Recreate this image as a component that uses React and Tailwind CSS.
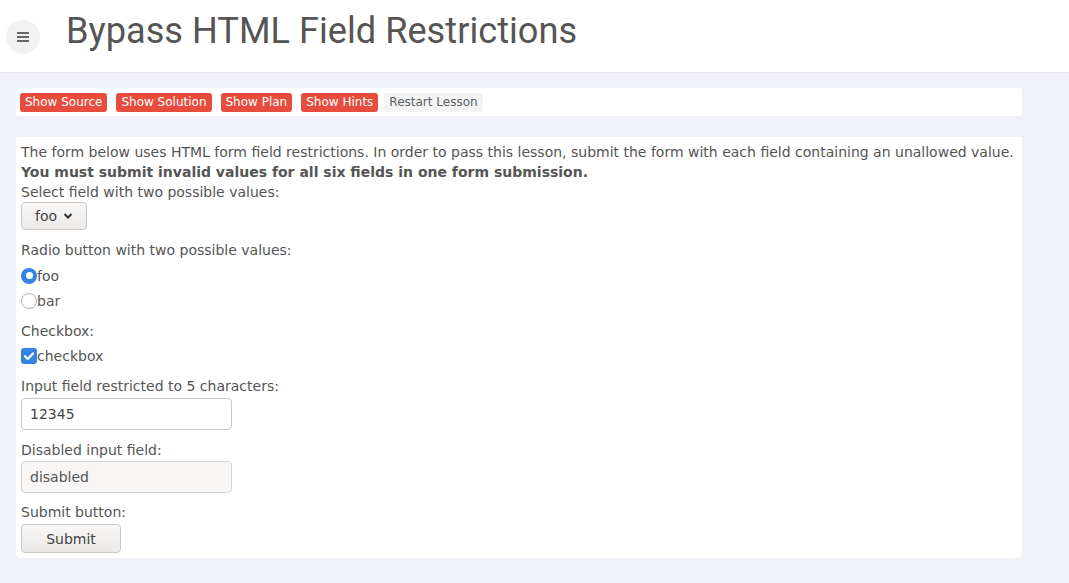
import React from "react";

const body = { fontFamily: '"DejaVu Sans", sans-serif' };

const Radio = ({ checked }) =>
  checked ? (
    <span className="inline-flex w-[16px] h-[16px] rounded-full bg-[#3584e4] items-center justify-center">
      <span className="w-[7px] h-[7px] rounded-full bg-white" />
    </span>
  ) : (
    <span className="inline-block w-[16px] h-[16px] rounded-full border border-[#b7b1ab] bg-white" />
  );

const Checkbox = () => (
  <span className="inline-flex w-[16px] h-[16px] rounded-[3px] bg-[#3584e4] items-center justify-center">
    <svg width="12" height="12" viewBox="0 0 12 12">
      <polyline points="2,6.2 4.8,9 10,3.4" fill="none" stroke="white" strokeWidth="2.2" strokeLinecap="round" strokeLinejoin="round" />
    </svg>
  </span>
);

const LessonButton = ({ children }) => (
  <span className="px-[5px] h-[19px] leading-[19px] rounded-[3px] bg-[#e74c3c] text-white text-[12px]">
    {children}
  </span>
);

export default function App() {
  return (
    <div className="w-[1069px] h-[583px] bg-[#f0f1f6] overflow-hidden" style={body}>
      {/* Header */}
      <div className="h-[73px] bg-white border-b border-[#e4e4e8] flex items-center">
        <div className="ml-[6px] w-[34px] h-[34px] rounded-full bg-[#f2f2f2] flex items-center justify-center mt-[1px]">
          <svg width="12" height="10" viewBox="0 0 12 10">
            <rect x="0" y="0" width="12" height="2" fill="#666" />
            <rect x="0" y="4" width="12" height="2" fill="#666" />
            <rect x="0" y="8" width="12" height="2" fill="#666" />
          </svg>
        </div>
        <h1
          className="ml-[26px] text-[36.2px] text-[#555] leading-none -mt-[9px]"
          style={{ fontFamily: "Roboto, sans-serif" }}
        >
          Bypass HTML Field Restrictions
        </h1>
      </div>

      {/* Lesson buttons */}
      <div className="ml-[16px] w-[1006px] mt-[15px] h-[28px] bg-white rounded-[3px] flex items-center gap-[9px] px-[4px]">
        <LessonButton>Show Source</LessonButton>
        <LessonButton>Show Solution</LessonButton>
        <LessonButton>Show Plan</LessonButton>
        <LessonButton>Show Hints</LessonButton>
        <span className="px-[5px] h-[19px] leading-[19px] rounded-[3px] bg-[#f4f4f4] text-[#5a5f66] text-[12px] -ml-[3px]">
          Restart Lesson
        </span>
      </div>

      {/* Lesson content */}
      <div className="ml-[16px] w-[1006px] mt-[21px] bg-white rounded-[3px] px-[5px] pt-[5px] pb-[5px] text-[14px] leading-[20px] text-[#555]">
        <p>
          The form below uses HTML form field restrictions. In order to pass this lesson, submit the form with each field
          containing an unallowed value.
        </p>
        <p className="font-bold">You must submit invalid values for all six fields in one form submission.</p>
        <p>Select field with two possible values:</p>
        <div className="w-[66px] h-[28px] border border-[#cdc7c2] rounded-[4px] bg-gradient-to-b from-[#f8f7f6] to-[#edebe9] flex items-center pl-[13px] gap-[6px] text-[#444]">
          <span>foo</span>
          <svg width="10" height="8" viewBox="0 0 10 8">
            <polyline points="1.5,2 5,5.5 8.5,2" fill="none" stroke="#333" strokeWidth="2" />
          </svg>
        </div>

        <p className="mt-[10px]">Radio button with two possible values:</p>
        <div className="mt-[3px]">
          <div className="h-[25px] flex items-center">
            <Radio checked />
            <span>foo</span>
          </div>
          <div className="h-[25px] flex items-center">
            <Radio />
            <span>bar</span>
          </div>
        </div>

        <p className="mt-[8px]">Checkbox:</p>
        <div className="mt-[3px] h-[24px] flex items-center">
          <Checkbox />
          <span>checkbox</span>
        </div>

        <p className="mt-[8px]">Input field restricted to 5 characters:</p>
        <div className="mt-[2px] w-[211px] h-[32px] border border-[#cdc7c2] rounded-[4px] flex items-center pl-[8px] text-[#444]">
          12345
        </div>

        <p className="mt-[10px]">Disabled input field:</p>
        <div className="mt-[1px] w-[211px] h-[32px] border border-[#d8d4d0] rounded-[4px] bg-[#f7f6f5] flex items-center pl-[8px] text-[#555]">
          disabled
        </div>

        <p className="mt-[9px]">Submit button:</p>
        <div className="mt-[2px] w-[100px] h-[29px] border border-[#cdc7c2] rounded-[4px] bg-gradient-to-b from-[#f8f7f6] to-[#ebe9e7] flex items-center justify-center text-[#444]">
          Submit
        </div>
      </div>
    </div>
  );
}
